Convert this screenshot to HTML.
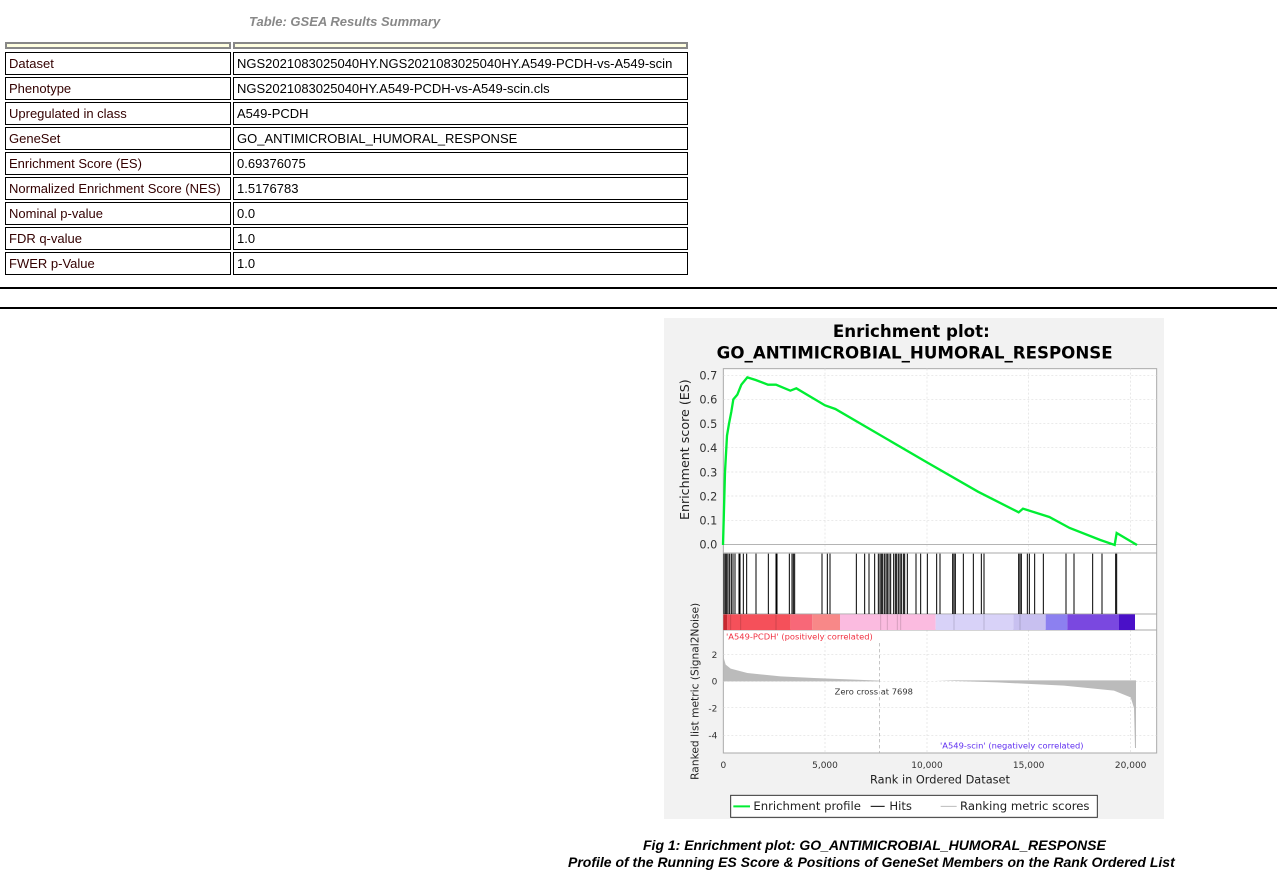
<!DOCTYPE html>
<html><head><meta charset="utf-8"><style>
body{margin:0;width:1277px;height:880px;background:#fff;position:relative;overflow:hidden;font-family:"Liberation Sans",Arial,sans-serif}
.c{position:absolute;border:1px solid #000;box-sizing:border-box;height:23px;font-size:13px;line-height:21px;padding-left:3px;white-space:nowrap;overflow:hidden;color:#000}
.l{left:5px;width:226px;color:#300}
.r{left:233px;width:455px}
.h{position:absolute;top:42px;height:7px;border:2px solid #888;box-sizing:border-box;background:#ffffe0}
.hr{position:absolute;left:0;width:1277px;height:2px;background:#000}
.cap{position:absolute;font-weight:bold;font-style:italic;font-size:14px;white-space:nowrap}
</style></head><body>
<div style="position:absolute;left:249px;top:14px;font-size:13px;font-weight:bold;font-style:italic;color:#888">Table: GSEA Results Summary</div>
<div class="h" style="left:5px;width:226px"></div><div class="h" style="left:233px;width:455px"></div>
<div class="c l" style="top:52px">Dataset</div><div class="c r" style="top:52px">NGS2021083025040HY.NGS2021083025040HY.A549-PCDH-vs-A549-scin</div>
<div class="c l" style="top:77px">Phenotype</div><div class="c r" style="top:77px">NGS2021083025040HY.A549-PCDH-vs-A549-scin.cls</div>
<div class="c l" style="top:102px">Upregulated in class</div><div class="c r" style="top:102px">A549-PCDH</div>
<div class="c l" style="top:127px">GeneSet</div><div class="c r" style="top:127px">GO_ANTIMICROBIAL_HUMORAL_RESPONSE</div>
<div class="c l" style="top:152px">Enrichment Score (ES)</div><div class="c r" style="top:152px">0.69376075</div>
<div class="c l" style="top:177px">Normalized Enrichment Score (NES)</div><div class="c r" style="top:177px">1.5176783</div>
<div class="c l" style="top:202px">Nominal p-value</div><div class="c r" style="top:202px">0.0</div>
<div class="c l" style="top:227px">FDR q-value</div><div class="c r" style="top:227px">1.0</div>
<div class="c l" style="top:252px">FWER p-Value</div><div class="c r" style="top:252px">1.0</div>
<div class="hr" style="top:287px"></div><div class="hr" style="top:307px"></div>

<svg style="position:absolute;left:664px;top:318px" width="500" height="501" viewBox="0 0 1500 1503" font-family="DejaVu Sans,sans-serif">
<rect width="1500" height="1503" fill="#f2f2f2"/>
<text x="742" y="57" font-size="50" font-weight="bold" text-anchor="middle">Enrichment plot:</text>
<text x="752" y="122" font-size="50" font-weight="bold" text-anchor="middle">GO_ANTIMICROBIAL_HUMORAL_RESPONSE</text>
<rect x="178" y="152" width="1300" height="1153" fill="#fff" stroke="#aaa" stroke-width="3"/>
<g stroke="#ddd" stroke-width="2" stroke-dasharray="6,6">
<line x1="178" y1="172" x2="1478" y2="172"/><line x1="178" y1="244" x2="1478" y2="244"/><line x1="178" y1="317" x2="1478" y2="317"/><line x1="178" y1="389" x2="1478" y2="389"/><line x1="178" y1="462" x2="1478" y2="462"/><line x1="178" y1="534" x2="1478" y2="534"/><line x1="178" y1="607" x2="1478" y2="607"/>
<line x1="483" y1="152" x2="483" y2="705"/><line x1="789" y1="152" x2="789" y2="705"/><line x1="1094" y1="152" x2="1094" y2="705"/><line x1="1400" y1="152" x2="1400" y2="705"/>
<line x1="178" y1="1010" x2="1478" y2="1010"/><line x1="178" y1="1168" x2="1478" y2="1168"/><line x1="178" y1="1252" x2="1478" y2="1252"/>
<line x1="483" y1="936" x2="483" y2="1305"/><line x1="789" y1="936" x2="789" y2="1305"/><line x1="1094" y1="936" x2="1094" y2="1305"/><line x1="1400" y1="936" x2="1400" y2="1305"/>
</g>
<line x1="178" y1="680" x2="1478" y2="680" stroke="#888" stroke-width="2"/>
<line x1="178" y1="705" x2="1478" y2="705" stroke="#aaa" stroke-width="3"/>
<line x1="178" y1="888" x2="1478" y2="888" stroke="#aaa" stroke-width="3"/>
<line x1="178" y1="936" x2="1478" y2="936" stroke="#aaa" stroke-width="3"/>
<polyline fill="none" stroke="#00ee33" stroke-width="7" points="177,681 180,572 183,462 189,353 195,317 202,281 208,244 220,230 232,200 250,178 275,186 312,200 336,200 379,218 397,211 483,262 514,273 789,433 942,521 1064,583 1077,572 1156,597 1217,630 1309,666 1352,681 1358,645 1419,681"/>
<g stroke="#000" stroke-width="3">
<line x1="180" y1="707" x2="180" y2="888"/><line x1="184" y1="707" x2="184" y2="888"/><line x1="188" y1="707" x2="188" y2="888"/><line x1="192" y1="707" x2="192" y2="888"/><line x1="197" y1="707" x2="197" y2="888"/><line x1="202" y1="707" x2="202" y2="888"/><line x1="207" y1="707" x2="207" y2="888"/><line x1="213" y1="707" x2="213" y2="888"/>
<line x1="225" y1="707" x2="225" y2="888"/><line x1="228" y1="707" x2="228" y2="888"/><line x1="238" y1="707" x2="238" y2="888"/><line x1="248" y1="707" x2="248" y2="888"/><line x1="276" y1="707" x2="276" y2="888"/><line x1="313" y1="707" x2="313" y2="888"/><line x1="336" y1="707" x2="336" y2="888"/><line x1="339" y1="707" x2="339" y2="888"/><line x1="376" y1="707" x2="376" y2="888"/><line x1="384" y1="707" x2="384" y2="888"/><line x1="388" y1="707" x2="388" y2="888"/><line x1="392" y1="707" x2="392" y2="888"/><line x1="474" y1="707" x2="474" y2="888"/><line x1="490" y1="707" x2="490" y2="888"/><line x1="498" y1="707" x2="498" y2="888"/><line x1="577" y1="707" x2="577" y2="888"/><line x1="602" y1="707" x2="602" y2="888"/><line x1="615" y1="707" x2="615" y2="888"/><line x1="632" y1="707" x2="632" y2="888"/>
<line x1="643" y1="707" x2="643" y2="888"/><line x1="648" y1="707" x2="648" y2="888"/><line x1="652" y1="707" x2="652" y2="888"/><line x1="656" y1="707" x2="656" y2="888"/><line x1="661" y1="707" x2="661" y2="888"/><line x1="666" y1="707" x2="666" y2="888"/><line x1="670" y1="707" x2="670" y2="888"/><line x1="675" y1="707" x2="675" y2="888"/><line x1="680" y1="707" x2="680" y2="888"/><line x1="689" y1="707" x2="689" y2="888"/><line x1="694" y1="707" x2="694" y2="888"/><line x1="698" y1="707" x2="698" y2="888"/><line x1="703" y1="707" x2="703" y2="888"/><line x1="708" y1="707" x2="708" y2="888"/><line x1="712" y1="707" x2="712" y2="888"/><line x1="718" y1="707" x2="718" y2="888"/><line x1="722" y1="707" x2="722" y2="888"/><line x1="730" y1="707" x2="730" y2="888"/>
<line x1="756" y1="707" x2="756" y2="888"/><line x1="770" y1="707" x2="770" y2="888"/><line x1="790" y1="707" x2="790" y2="888"/><line x1="818" y1="707" x2="818" y2="888"/><line x1="828" y1="707" x2="828" y2="888"/><line x1="866" y1="707" x2="866" y2="888"/><line x1="870" y1="707" x2="870" y2="888"/><line x1="874" y1="707" x2="874" y2="888"/><line x1="898" y1="707" x2="898" y2="888"/><line x1="928" y1="707" x2="928" y2="888"/><line x1="952" y1="707" x2="952" y2="888"/><line x1="960" y1="707" x2="960" y2="888"/><line x1="1064" y1="707" x2="1064" y2="888"/><line x1="1068" y1="707" x2="1068" y2="888"/><line x1="1072" y1="707" x2="1072" y2="888"/><line x1="1090" y1="707" x2="1090" y2="888"/><line x1="1096" y1="707" x2="1096" y2="888"/><line x1="1112" y1="707" x2="1112" y2="888"/><line x1="1138" y1="707" x2="1138" y2="888"/><line x1="1206" y1="707" x2="1206" y2="888"/><line x1="1230" y1="707" x2="1230" y2="888"/><line x1="1286" y1="707" x2="1286" y2="888"/><line x1="1314" y1="707" x2="1314" y2="888"/><line x1="1355" y1="707" x2="1355" y2="888"/><line x1="1358" y1="707" x2="1358" y2="888"/>
</g>
<rect x="178" y="889" width="12" height="47" fill="#c82830"/><rect x="190" y="889" width="190" height="47" fill="#f5505a"/><rect x="380" y="889" width="65" height="47" fill="#f86878"/><rect x="445" y="889" width="83" height="47" fill="#f88888"/><rect x="528" y="889" width="287" height="47" fill="#fbbbe0"/><rect x="815" y="889" width="233" height="47" fill="#d8d2f8"/><rect x="1048" y="889" width="97" height="47" fill="#c8c0f0"/><rect x="1145" y="889" width="65" height="47" fill="#8c80f0"/><rect x="1210" y="889" width="155" height="47" fill="#7a48e0"/><rect x="1365" y="889" width="48" height="47" fill="#4a10c8"/>
<g stroke="#000" stroke-opacity="0.15" stroke-width="3"><line x1="200" y1="889" x2="200" y2="936"/><line x1="230" y1="889" x2="230" y2="936"/><line x1="336" y1="889" x2="336" y2="936"/><line x1="650" y1="889" x2="650" y2="936"/><line x1="670" y1="889" x2="670" y2="936"/><line x1="700" y1="889" x2="700" y2="936"/><line x1="710" y1="889" x2="710" y2="936"/><line x1="870" y1="889" x2="870" y2="936"/><line x1="960" y1="889" x2="960" y2="936"/><line x1="1068" y1="889" x2="1068" y2="936"/></g>
<line x1="178" y1="1090" x2="1478" y2="1090" stroke="#ddd" stroke-width="2" stroke-dasharray="6,6"/>
<path d="M178,1090 L178,1015 L185,1040 L200,1052 L250,1065 L350,1075 L450,1080 L647,1088 L647,1090 Z" fill="#bbb"/>
<path d="M815,1087 L1000,1093 L1200,1103 L1350,1118 L1400,1138 L1410,1170 L1413,1290 L1416,1290 L1416,1087 Z" fill="#bbb"/>
<line x1="647" y1="975" x2="647" y2="1305" stroke="#aaa" stroke-width="2" stroke-dasharray="10,8"/>
<text x="186" y="965" font-size="25" fill="#f03040">'A549-PCDH' (positively correlated)</text>
<text x="828" y="1292" font-size="25" fill="#6030f0">'A549-scin' (negatively correlated)</text>
<text x="512" y="1130" font-size="25" fill="#333">Zero cross at 7698</text>
<g font-size="34" fill="#333" text-anchor="end"><text x="160" y="185">0.7</text><text x="160" y="257">0.6</text><text x="160" y="330">0.5</text><text x="160" y="402">0.4</text><text x="160" y="475">0.3</text><text x="160" y="547">0.2</text><text x="160" y="620">0.1</text><text x="160" y="692">0.0</text></g>
<g font-size="27" fill="#333" text-anchor="end"><text x="160" y="1020">2</text><text x="160" y="1100">0</text><text x="160" y="1180">-2</text><text x="160" y="1262">-4</text></g>
<g font-size="27" fill="#333" text-anchor="middle"><text x="178" y="1350">0</text><text x="483" y="1350">5,000</text><text x="789" y="1350">10,000</text><text x="1094" y="1350">15,000</text><text x="1400" y="1350">20,000</text></g>
<text x="828" y="1397" font-size="34" fill="#222" text-anchor="middle">Rank in Ordered Dataset</text>
<text transform="translate(75,395) rotate(-90)" font-size="38" fill="#222" text-anchor="middle">Enrichment score (ES)</text>
<text transform="translate(103,1120) rotate(-90)" font-size="32" fill="#222" text-anchor="middle">Ranked list metric (Signal2Noise)</text>
<rect x="200" y="1432" width="1100" height="66" fill="#fff" stroke="#333" stroke-width="3"/>
<line x1="208" y1="1465" x2="258" y2="1465" stroke="#00ee33" stroke-width="6"/>
<line x1="620" y1="1465" x2="662" y2="1465" stroke="#000" stroke-width="3"/>
<line x1="830" y1="1465" x2="878" y2="1465" stroke="#bbb" stroke-width="3"/>
<text x="268" y="1476" font-size="35" fill="#222">Enrichment profile</text>
<text x="676" y="1476" font-size="35" fill="#222">Hits</text>
<text x="888" y="1476" font-size="35" fill="#222">Ranking metric scores</text>
</svg>
<div class="cap" style="left:643px;top:837px">Fig 1: Enrichment plot: GO_ANTIMICROBIAL_HUMORAL_RESPONSE</div>
<div class="cap" style="left:568px;top:854px">Profile of the Running ES Score &amp; Positions of GeneSet Members on the Rank Ordered List</div>
</body></html>
